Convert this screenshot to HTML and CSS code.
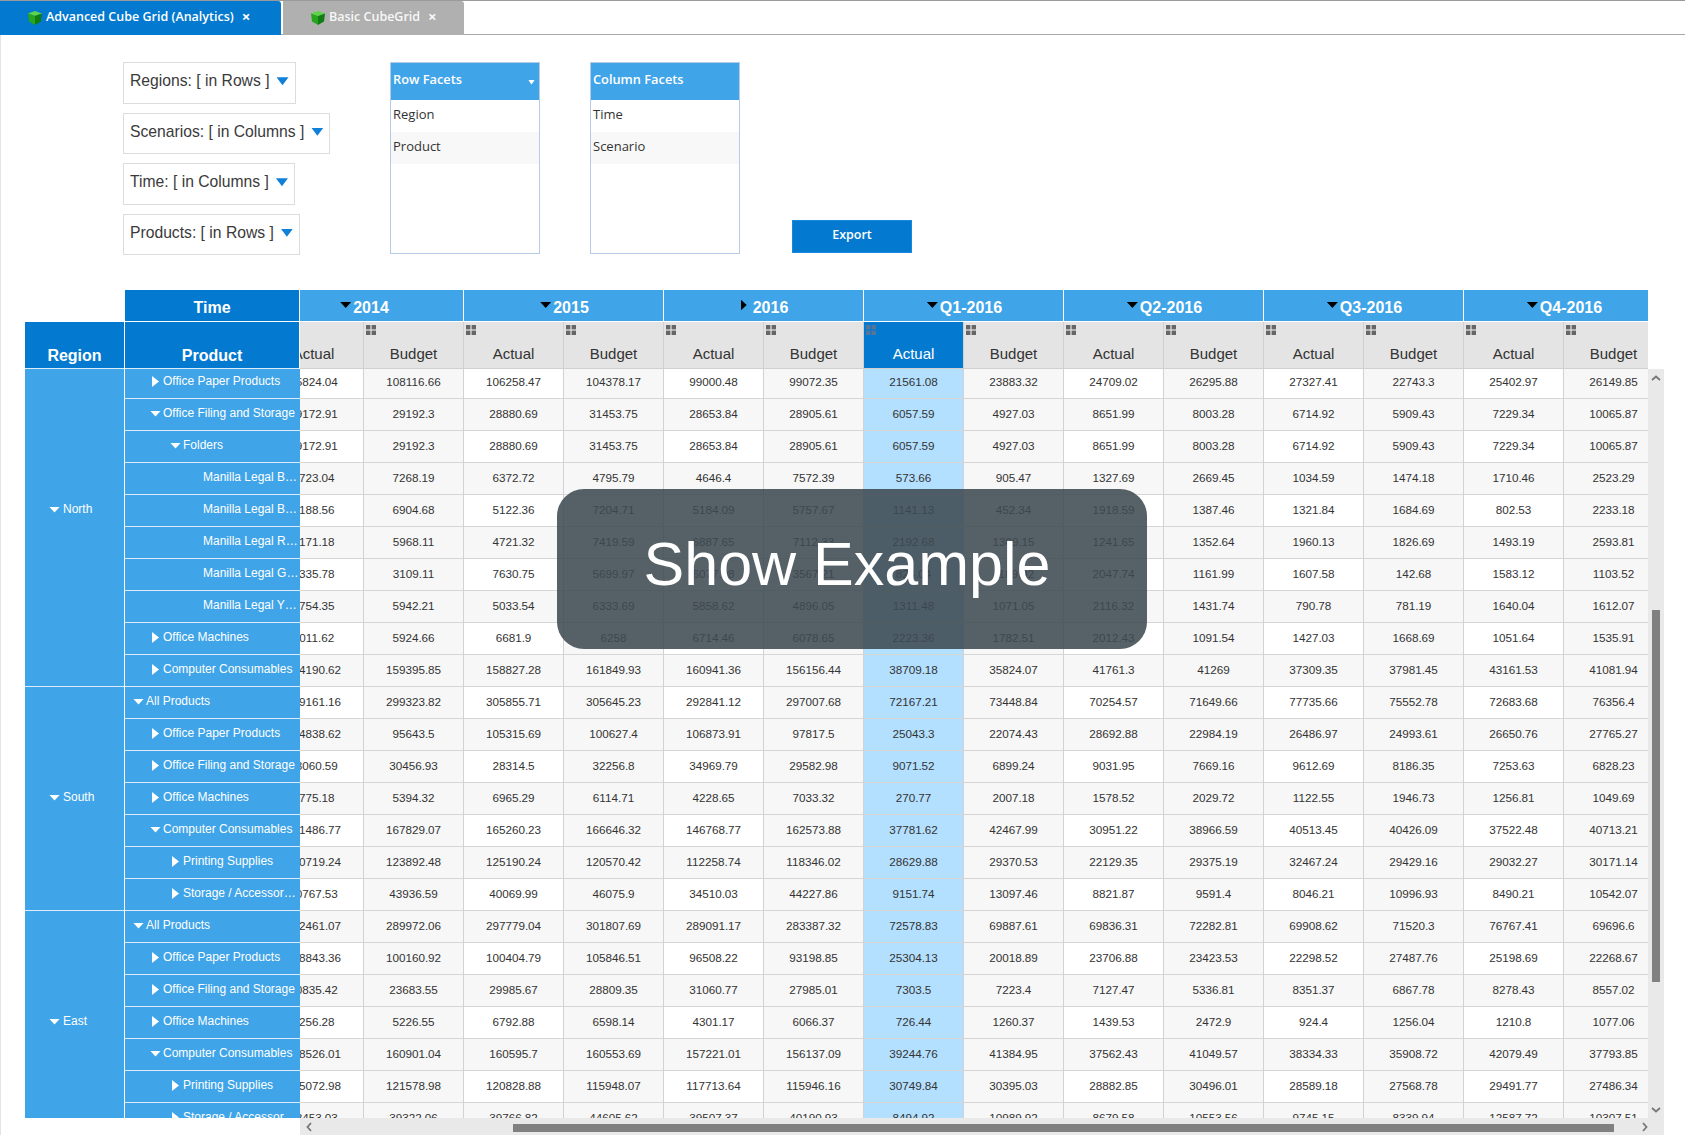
FILE: index.html
```html
<!DOCTYPE html>
<html lang="en">
<head>
    <meta charset="UTF-8">
    <title>Advanced Cube Grid (Analytics)</title>
    <link rel="stylesheet" href="styles.css">
</head>
<body>
    <svg class="defs" width="0" height="0">
        <symbol id="cube" viewBox="0 0 14 14">
            <polygon points="0,2.5 7,0 14,2.5 7,5" fill="#5fd44a"/>
            <polygon points="0,2.5 7,5 7,14 1,10.5" fill="#27a51f"/>
            <polygon points="14,2.5 7,5 7,14 13,10.5" fill="#0f7d14"/>
        </symbol>
        <symbol id="grip" viewBox="0 0 10 10">
            <rect width="4.4" height="4.4"/><rect x="5.6" width="4.4" height="4.4"/>
            <rect y="5.6" width="4.4" height="4.4"/><rect x="5.6" y="5.6" width="4.4" height="4.4"/>
        </symbol>
    </svg>

    <div class="tabs">
        <div class="tab tab-active">
            <svg class="cube"><use href="#cube"/></svg>
            <span>Advanced Cube Grid (Analytics)</span>
            <span class="tab-close">×</span>
        </div>
        <div class="tab tab-idle">
            <svg class="cube"><use href="#cube"/></svg>
            <span>Basic CubeGrid</span>
            <span class="tab-close">×</span>
        </div>
    </div>

    <div class="controls">
        <div class="pickers">
            <div class="picker">Regions: [ in Rows ]<i class="picker-arrow"></i></div>
            <div class="picker">Scenarios: [ in Columns ]<i class="picker-arrow"></i></div>
            <div class="picker">Time: [ in Columns ]<i class="picker-arrow"></i></div>
            <div class="picker">Products: [ in Rows ]<i class="picker-arrow"></i></div>
        </div>
        <div class="facets">
            <div class="facets-title">Row Facets<i class="facets-arrow"></i></div>
            <div class="facets-row">Region</div>
            <div class="facets-row facets-alt">Product</div>
        </div>
        <div class="facets">
            <div class="facets-title">Column Facets</div>
            <div class="facets-row">Time</div>
            <div class="facets-row facets-alt">Scenario</div>
        </div>
        <button class="export">Export</button>
    </div>

    <div class="pivot">
        <div class="pivot-main">
            <div class="frozen">
                <div class="frozen-time">Time</div>
                <div class="frozen-fields">
                    <div class="field field-region">Region</div>
                    <div class="field field-product">Product</div>
                </div>
                <div class="frozen-body">
                    <div class="frozen-rows">
                        <div class="regions">
                            <div class="region region-north"><i class="tri tri-down"></i>North</div>
                            <div class="region region-south"><i class="tri tri-down"></i>South</div>
                            <div class="region region-east"><i class="tri tri-down"></i>East</div>
                        </div>
                        <div class="tree">
                            <div class="node lvl-1"><i class="tri tri-right"></i>Office Paper Products</div>
                            <div class="node lvl-1"><i class="tri tri-down"></i>Office Filing and Storage</div>
                            <div class="node lvl-2"><i class="tri tri-down"></i>Folders</div>
                            <div class="node lvl-3">Manilla Legal B…</div>
                            <div class="node lvl-3">Manilla Legal B…</div>
                            <div class="node lvl-3">Manilla Legal R…</div>
                            <div class="node lvl-3">Manilla Legal G…</div>
                            <div class="node lvl-3">Manilla Legal Y…</div>
                            <div class="node lvl-1"><i class="tri tri-right"></i>Office Machines</div>
                            <div class="node lvl-1 node-end"><i class="tri tri-right"></i>Computer Consumables</div>

                            <div class="node lvl-0"><i class="tri tri-down"></i>All Products</div>
                            <div class="node lvl-1"><i class="tri tri-right"></i>Office Paper Products</div>
                            <div class="node lvl-1"><i class="tri tri-right"></i>Office Filing and Storage</div>
                            <div class="node lvl-1"><i class="tri tri-right"></i>Office Machines</div>
                            <div class="node lvl-1"><i class="tri tri-down"></i>Computer Consumables</div>
                            <div class="node lvl-2"><i class="tri tri-right"></i>Printing Supplies</div>
                            <div class="node lvl-2 node-end"><i class="tri tri-right"></i>Storage / Accessor…</div>

                            <div class="node lvl-0"><i class="tri tri-down"></i>All Products</div>
                            <div class="node lvl-1"><i class="tri tri-right"></i>Office Paper Products</div>
                            <div class="node lvl-1"><i class="tri tri-right"></i>Office Filing and Storage</div>
                            <div class="node lvl-1"><i class="tri tri-right"></i>Office Machines</div>
                            <div class="node lvl-1"><i class="tri tri-down"></i>Computer Consumables</div>
                            <div class="node lvl-2"><i class="tri tri-right"></i>Printing Supplies</div>
                            <div class="node lvl-2"><i class="tri tri-right"></i>Storage / Accessor…</div>
                        </div>
                    </div>
                </div>
            </div>

            <div class="grid">
                <div class="grid-head">
                    <div class="groups">
                        <div class="group"><i class="tri-black tri-down"></i>2014</div>
                        <div class="group"><i class="tri-black tri-down"></i>2015</div>
                        <div class="group"><i class="tri-black tri-right tri-up"></i>2016</div>
                        <div class="group"><i class="tri-black tri-down"></i>Q1-2016</div>
                        <div class="group"><i class="tri-black tri-down"></i>Q2-2016</div>
                        <div class="group"><i class="tri-black tri-down"></i>Q3-2016</div>
                        <div class="group"><i class="tri-black tri-down"></i>Q4-2016</div>
                    </div>
                    <div class="scenarios">
                        <div class="scenario"><svg class="grip"><use href="#grip"/></svg>Actual</div>
                        <div class="scenario"><svg class="grip"><use href="#grip"/></svg>Budget</div>
                        <div class="scenario"><svg class="grip"><use href="#grip"/></svg>Actual</div>
                        <div class="scenario"><svg class="grip"><use href="#grip"/></svg>Budget</div>
                        <div class="scenario"><svg class="grip"><use href="#grip"/></svg>Actual</div>
                        <div class="scenario"><svg class="grip"><use href="#grip"/></svg>Budget</div>
                        <div class="scenario scenario-on"><svg class="grip"><use href="#grip"/></svg>Actual</div>
                        <div class="scenario"><svg class="grip"><use href="#grip"/></svg>Budget</div>
                        <div class="scenario"><svg class="grip"><use href="#grip"/></svg>Actual</div>
                        <div class="scenario"><svg class="grip"><use href="#grip"/></svg>Budget</div>
                        <div class="scenario"><svg class="grip"><use href="#grip"/></svg>Actual</div>
                        <div class="scenario"><svg class="grip"><use href="#grip"/></svg>Budget</div>
                        <div class="scenario"><svg class="grip"><use href="#grip"/></svg>Actual</div>
                        <div class="scenario"><svg class="grip"><use href="#grip"/></svg>Budget</div>
                    </div>
                </div>
                <div class="grid-body">
                    <table class="cells">
                        <tr><td>95824.04</td><td>108116.66</td><td>106258.47</td><td>104378.17</td><td>99000.48</td><td>99072.35</td><td>21561.08</td><td>23883.32</td><td>24709.02</td><td>26295.88</td><td>27327.41</td><td>22743.3</td><td>25402.97</td><td>26149.85</td></tr>
                        <tr><td>29172.91</td><td>29192.3</td><td>28880.69</td><td>31453.75</td><td>28653.84</td><td>28905.61</td><td>6057.59</td><td>4927.03</td><td>8651.99</td><td>8003.28</td><td>6714.92</td><td>5909.43</td><td>7229.34</td><td>10065.87</td></tr>
                        <tr><td>29172.91</td><td>29192.3</td><td>28880.69</td><td>31453.75</td><td>28653.84</td><td>28905.61</td><td>6057.59</td><td>4927.03</td><td>8651.99</td><td>8003.28</td><td>6714.92</td><td>5909.43</td><td>7229.34</td><td>10065.87</td></tr>
                        <tr><td>6723.04</td><td>7268.19</td><td>6372.72</td><td>4795.79</td><td>4646.4</td><td>7572.39</td><td>573.66</td><td>905.47</td><td>1327.69</td><td>2669.45</td><td>1034.59</td><td>1474.18</td><td>1710.46</td><td>2523.29</td></tr>
                        <tr><td>6188.56</td><td>6904.68</td><td>5122.36</td><td>7204.71</td><td>5184.09</td><td>5757.67</td><td>1141.13</td><td>452.34</td><td>1918.59</td><td>1387.46</td><td>1321.84</td><td>1684.69</td><td>802.53</td><td>2233.18</td></tr>
                        <tr><td>4171.18</td><td>5968.11</td><td>4721.32</td><td>7419.59</td><td>6887.65</td><td>7112.33</td><td>2192.68</td><td>1309.15</td><td>1241.65</td><td>1352.64</td><td>1960.13</td><td>1826.69</td><td>1493.19</td><td>2593.81</td></tr>
                        <tr><td>3335.78</td><td>3109.11</td><td>7630.75</td><td>5699.97</td><td>6077.08</td><td>3567.21</td><td>824.04</td><td>1189.92</td><td>2047.74</td><td>1161.99</td><td>1607.58</td><td>142.68</td><td>1583.12</td><td>1103.52</td></tr>
                        <tr><td>5754.35</td><td>5942.21</td><td>5033.54</td><td>6333.69</td><td>5858.62</td><td>4896.05</td><td>1311.48</td><td>1071.05</td><td>2116.32</td><td>1431.74</td><td>790.78</td><td>781.19</td><td>1640.04</td><td>1612.07</td></tr>
                        <tr><td>7011.62</td><td>5924.66</td><td>6681.9</td><td>6258</td><td>6714.46</td><td>6078.65</td><td>2223.36</td><td>1782.51</td><td>2012.43</td><td>1091.54</td><td>1427.03</td><td>1668.69</td><td>1051.64</td><td>1535.91</td></tr>
                        <tr><td>154190.62</td><td>159395.85</td><td>158827.28</td><td>161849.93</td><td>160941.36</td><td>156156.44</td><td>38709.18</td><td>35824.07</td><td>41761.3</td><td>41269</td><td>37309.35</td><td>37981.45</td><td>43161.53</td><td>41081.94</td></tr>
                        <tr><td>299161.16</td><td>299323.82</td><td>305855.71</td><td>305645.23</td><td>292841.12</td><td>297007.68</td><td>72167.21</td><td>73448.84</td><td>70254.57</td><td>71649.66</td><td>77735.66</td><td>75552.78</td><td>72683.68</td><td>76356.4</td></tr>
                        <tr><td>104838.62</td><td>95643.5</td><td>105315.69</td><td>100627.4</td><td>106873.91</td><td>97817.5</td><td>25043.3</td><td>22074.43</td><td>28692.88</td><td>22984.19</td><td>26486.97</td><td>24993.61</td><td>26650.76</td><td>27765.27</td></tr>
                        <tr><td>33060.59</td><td>30456.93</td><td>28314.5</td><td>32256.8</td><td>34969.79</td><td>29582.98</td><td>9071.52</td><td>6899.24</td><td>9031.95</td><td>7669.16</td><td>9612.69</td><td>8186.35</td><td>7253.63</td><td>6828.23</td></tr>
                        <tr><td>5775.18</td><td>5394.32</td><td>6965.29</td><td>6114.71</td><td>4228.65</td><td>7033.32</td><td>270.77</td><td>2007.18</td><td>1578.52</td><td>2029.72</td><td>1122.55</td><td>1946.73</td><td>1256.81</td><td>1049.69</td></tr>
                        <tr><td>161486.77</td><td>167829.07</td><td>165260.23</td><td>166646.32</td><td>146768.77</td><td>162573.88</td><td>37781.62</td><td>42467.99</td><td>30951.22</td><td>38966.59</td><td>40513.45</td><td>40426.09</td><td>37522.48</td><td>40713.21</td></tr>
                        <tr><td>120719.24</td><td>123892.48</td><td>125190.24</td><td>120570.42</td><td>112258.74</td><td>118346.02</td><td>28629.88</td><td>29370.53</td><td>22129.35</td><td>29375.19</td><td>32467.24</td><td>29429.16</td><td>29032.27</td><td>30171.14</td></tr>
                        <tr><td>40767.53</td><td>43936.59</td><td>40069.99</td><td>46075.9</td><td>34510.03</td><td>44227.86</td><td>9151.74</td><td>13097.46</td><td>8821.87</td><td>9591.4</td><td>8046.21</td><td>10996.93</td><td>8490.21</td><td>10542.07</td></tr>
                        <tr><td>292461.07</td><td>289972.06</td><td>297779.04</td><td>301807.69</td><td>289091.17</td><td>283387.32</td><td>72578.83</td><td>69887.61</td><td>69836.31</td><td>72282.81</td><td>69908.62</td><td>71520.3</td><td>76767.41</td><td>69696.6</td></tr>
                        <tr><td>108843.36</td><td>100160.92</td><td>100404.79</td><td>105846.51</td><td>96508.22</td><td>93198.85</td><td>25304.13</td><td>20018.89</td><td>23706.88</td><td>23423.53</td><td>22298.52</td><td>27487.76</td><td>25198.69</td><td>22268.67</td></tr>
                        <tr><td>30835.42</td><td>23683.55</td><td>29985.67</td><td>28809.35</td><td>31060.77</td><td>27985.01</td><td>7303.5</td><td>7223.4</td><td>7127.47</td><td>5336.81</td><td>8351.37</td><td>6867.78</td><td>8278.43</td><td>8557.02</td></tr>
                        <tr><td>5256.28</td><td>5226.55</td><td>6792.88</td><td>6598.14</td><td>4301.17</td><td>6066.37</td><td>726.44</td><td>1260.37</td><td>1439.53</td><td>2472.9</td><td>924.4</td><td>1256.04</td><td>1210.8</td><td>1077.06</td></tr>
                        <tr><td>158526.01</td><td>160901.04</td><td>160595.7</td><td>160553.69</td><td>157221.01</td><td>156137.09</td><td>39244.76</td><td>41384.95</td><td>37562.43</td><td>41049.57</td><td>38334.33</td><td>35908.72</td><td>42079.49</td><td>37793.85</td></tr>
                        <tr><td>125072.98</td><td>121578.98</td><td>120828.88</td><td>115948.07</td><td>117713.64</td><td>115946.16</td><td>30749.84</td><td>30395.03</td><td>28882.85</td><td>30496.01</td><td>28589.18</td><td>27568.78</td><td>29491.77</td><td>27486.34</td></tr>
                        <tr><td>38453.03</td><td>39322.06</td><td>39766.82</td><td>44605.62</td><td>39507.37</td><td>40190.93</td><td>8494.92</td><td>10989.92</td><td>8679.58</td><td>10553.56</td><td>9745.15</td><td>8339.94</td><td>12587.72</td><td>10307.51</td></tr>
                    </table>
                </div>
            </div>

            <div class="vscroll">
                <svg class="chev" viewBox="0 0 10 6"><path d="M1 5 5 1.5 9 5"/></svg>
                <div class="vthumb"></div>
                <svg class="chev chev-bottom" viewBox="0 0 10 6"><path d="M1 1 5 4.5 9 1"/></svg>
            </div>
        </div>

        <div class="hscroll">
            <svg class="chev-h" viewBox="0 0 6 10"><path d="M5 1 1.5 5 5 9"/></svg>
            <div class="hthumb"></div>
            <svg class="chev-h" viewBox="0 0 6 10"><path d="M1 1 4.5 5 1 9"/></svg>
        </div>
    </div>

    <div class="example-badge">Show Example</div>
</body>
</html>
```

FILE: styles.css
```css
body {
    margin: 0;
    height: 1135px;
    overflow: hidden;
    position: relative;
    background-color: #fff;
    box-shadow: inset 1px 0 #e4e4e4;
    font-family: "Liberation Sans", Arial, sans-serif;
    color: #333;
}
.defs {
    position: absolute;
}

/* tabs */
.tabs {
    display: flex;
    height: 35px;
    box-sizing: border-box;
    border-top: 1px solid #9a9a9a;
    border-bottom: 1px solid #a8a8a8;
    font-family: "Open Sans", sans-serif;
    font-size: 12.5px;
    font-weight: 600;
}
.tab {
    display: flex;
    align-items: center;
    height: 34px;
    box-sizing: border-box;
    padding-bottom: 4px;
    border-top-right-radius: 3px;
}
.tab-active {
    width: 281px;
    padding-left: 28px;
    margin-right: 2px;
    background-color: #0479d0;
    color: #fff;
}
.tab-idle {
    width: 181px;
    padding-left: 28px;
    background-color: #b0b0b0;
    color: #f7f7f7;
}
.cube {
    width: 14px;
    height: 14px;
    margin: 4px 4px 0 0;
    flex: none;
}
.tab-close {
    margin-left: 8px;
    font-size: 15px;
    font-weight: 700;
}

/* pickers and facets */
.controls {
    display: flex;
    align-items: flex-end;
    height: 193px;
    margin-top: 27px;
    padding-left: 123px;
}
.pickers {
    width: 267px;
    align-self: flex-start;
}
.picker {
    display: flex;
    align-items: center;
    width: fit-content;
    height: 41.5px;
    box-sizing: border-box;
    margin-bottom: 9px;
    padding: 0 6px 3px 6px;
    border: 1px solid #dcdcdc;
    font-size: 15.7px;
    color: #3a3a3a;
}
.picker-arrow {
    width: 12px;
    height: 8px;
    margin-left: 7px;
    background-color: #1080d8;
    clip-path: polygon(0 0, 100% 0, 50% 100%);
}
.facets {
    width: 150px;
    height: 192px;
    box-sizing: border-box;
    margin-right: 50px;
    align-self: flex-start;
    border: 1px solid #b8cbe6;
    font-family: "Open Sans", sans-serif;
    font-size: 13px;
}
.facets-title {
    display: flex;
    align-items: center;
    justify-content: space-between;
    height: 37px;
    padding: 0 4px 6px 2px;
    box-sizing: border-box;
    background-color: #3fa4e8;
    color: #fff;
    font-size: 12.8px;
    font-weight: 600;
}
.facets-arrow {
    width: 7px;
    height: 5px;
    margin-top: 7px;
    background-color: #fff;
    clip-path: polygon(0 0, 100% 0, 50% 100%);
}
.facets-row {
    display: flex;
    align-items: center;
    height: 32px;
    padding: 0 0 4px 2px;
    box-sizing: border-box;
}
.facets-alt {
    background-color: #f8f8f8;
}
.export {
    width: 120px;
    height: 33px;
    margin: 0 0 2px 2px;
    padding: 0 0 4px;
    border: 1px solid #1888de;
    background-color: #0479d0;
    color: #fff;
    font-family: "Open Sans", sans-serif;
    font-size: 12.5px;
    font-weight: 600;
}

/* pivot grid */
.pivot {
    margin: 35px 0 0 25px;
}
.pivot-main {
    display: flex;
    height: 828px;
}
.frozen {
    width: 275px;
    flex: none;
    color: #fff;
}
.frozen-time {
    display: flex;
    align-items: center;
    justify-content: center;
    height: 31px;
    margin: 0 1px 1px 100px;
    padding-top: 4px;
    box-sizing: border-box;
    background-color: #0479d0;
    font-size: 16px;
    font-weight: bold;
}
.frozen-fields {
    display: flex;
    height: 47px;
    font-size: 16px;
    font-weight: bold;
}
.field {
    display: flex;
    align-items: flex-end;
    justify-content: center;
    padding-bottom: 3px;
    box-sizing: border-box;
    background-color: #0479d0;
    border-bottom: 1px solid #d8ecfa;
}
.field-region {
    width: 99px;
    margin-right: 1px;
}
.field-product {
    width: 174px;
}
.frozen-body {
    height: 749px;
    overflow: hidden;
}
.frozen-rows {
    display: flex;
    margin-top: -2px;
    font-size: 12px;
}
.regions {
    width: 99px;
    margin-right: 1px;
    flex: none;
}
.region {
    display: flex;
    align-items: center;
    height: 224px;
    padding: 0 0 4px 24px;
    box-sizing: border-box;
    background-color: #3fa4e8;
    border-bottom: 1px solid #d8ecfa;
}
.region .tri {
    margin-right: 3px;
}
.region-north {
    height: 320px;
    padding-bottom: 36px;
}
.tree {
    width: 174.6px;
}
.node {
    display: flex;
    align-items: center;
    height: 32px;
    box-sizing: border-box;
    padding-bottom: 4px;
    background-color: #3fa4e8;
    border-bottom: 1px solid #d8ecfa;
    white-space: nowrap;
}
.lvl-0 { padding-left: 8px; }
.lvl-1 { padding-left: 25px; }
.lvl-2 { padding-left: 45px; }
.lvl-3 { padding-left: 78px; }
.tri {
    flex: none;
    background-color: #fff;
}
.tri-down {
    width: 11px;
    height: 6px;
    margin: 2px 2px 0 0;
    clip-path: polygon(0 0, 100% 0, 50% 100%);
}
.tri-right {
    width: 7px;
    height: 11px;
    margin: 2px 4px 0 2px;
    clip-path: polygon(0 0, 100% 50%, 0 100%);
}
.tri-black {
    flex: none;
    background-color: #000;
}
.group .tri-down {
    width: 11px;
    height: 6px;
    margin: 0 2px 6px 0;
}
.group .tri-up {
    width: 6px;
    height: 11px;
    margin: 0 6px 6px 0;
}

.grid {
    width: 1348px;
    flex: none;
    overflow: hidden;
}
.grid-head {
    width: 1400px;
    margin-left: -36px;
}
.groups {
    display: flex;
    height: 31px;
    margin-bottom: 1px;
    background-color: #3fa4e8;
}
.group {
    display: flex;
    align-items: center;
    justify-content: center;
    width: 200px;
    padding: 5px 0 0 2px;
    box-sizing: border-box;
    border-right: 1px solid #fff;
    color: #fff;
    font-size: 16px;
    font-weight: bold;
}
.scenarios {
    display: flex;
    height: 47px;
}
.scenario {
    position: relative;
    width: 100px;
    box-sizing: border-box;
    padding-top: 22px;
    background-color: #e4e4e4;
    border-right: 1px solid #d0d0d0;
    border-bottom: 1px solid #d0d0d0;
    text-align: center;
    font-size: 15px;
    line-height: 20px;
}
.scenario-on {
    background-color: #0479d0;
    color: #fff;
}
.grip {
    position: absolute;
    top: 3px;
    left: 2px;
    width: 10px;
    height: 10px;
    fill: #666;
}
.scenario-on .grip {
    fill: #53769a;
}
.grid-body {
    height: 749px;
    overflow: hidden;
}
.cells {
    width: 1400px;
    margin: -2px 0 0 -36px;
    table-layout: fixed;
    border-collapse: separate;
    border-spacing: 0;
    font-size: 11.7px;
}
.cells td {
    height: 32px;
    padding: 0 0 3px;
    box-sizing: border-box;
    border-right: 1px solid #d2d2d2;
    border-bottom: 1px solid #d6d6d6;
    text-align: center;
    background-color: #fff;
}
.cells tr:nth-child(even) td,
.cells td:nth-child(even) {
    background-color: #f7f7f7;
}
.cells tr td:nth-child(7) {
    background-color: #b3e0ff;
}

/* scrollbars */
.vscroll {
    width: 16px;
    height: 749px;
    margin-top: 79px;
    flex: none;
    display: flex;
    flex-direction: column;
    align-items: center;
    background-color: #e9e9e9;
}
.chev {
    width: 10px;
    height: 6px;
    margin-top: 6px;
    flex: none;
}
.chev-bottom {
    margin-top: 125px;
}
.chev path,
.chev-h path {
    fill: none;
    stroke: #777;
    stroke-width: 1.8;
}
.vthumb {
    width: 8px;
    height: 372px;
    margin-top: 229px;
    flex: none;
    background-color: #808080;
}
.hscroll {
    display: flex;
    align-items: center;
    width: 1364px;
    height: 17px;
    margin-left: 275px;
    background-color: #e9e9e9;
}
.chev-h {
    width: 6px;
    height: 10px;
    margin-left: 6px;
    flex: none;
}
.hthumb {
    width: 1101px;
    height: 8px;
    margin: 2px 22px 0 201px;
    flex: none;
    background-color: #808080;
}

/* overlay */
.example-badge {
    position: absolute;
    top: 489px;
    left: 557px;
    display: flex;
    align-items: center;
    justify-content: center;
    width: 590px;
    height: 160px;
    padding: 0 10px 10px 0;
    box-sizing: border-box;
    border-radius: 27px;
    background-color: rgba(62, 74, 82, 0.87);
    color: #fff;
    font-size: 61px;
}
```
